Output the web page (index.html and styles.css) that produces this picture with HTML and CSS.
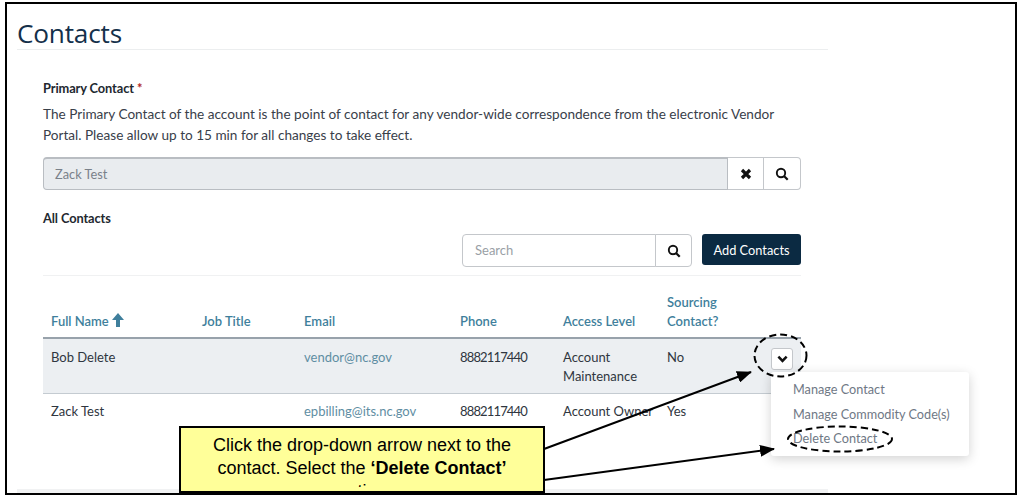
FILE: index.html
```html
<!DOCTYPE html>
<html lang="en">
<head>
<meta charset="utf-8">
<title>Contacts</title>
<link rel="stylesheet" href="styles.css">
</head>
<body>
<div class="frame">
  <div class="page">
    <h1 class="title">Contacts</h1>
    <section class="content">
      <div class="label">Primary Contact <span class="req">*</span></div>
      <p class="help">The Primary Contact of the account is the point of contact for any vendor-wide correspondence from the electronic Vendor Portal. Please allow up to 15 min for all changes to take effect.</p>
      <div class="primary">
        <div class="primary-input">Zack Test</div>
        <button class="addon"><svg class="ico" viewBox="0 0 12 12"><path d="M2 2L10 10M10 2L2 10" stroke="#111" stroke-width="3.2" fill="none"/></svg></button>
        <button class="addon addon-end"><svg class="ico-s" viewBox="0 0 14 14"><circle cx="6" cy="6" r="4.2" stroke="#111" stroke-width="1.9" fill="none"/><path d="M9 9L12.7 12.7" stroke="#111" stroke-width="2.2"/></svg></button>
      </div>
      <div class="label all">All Contacts</div>
      <div class="tools">
        <div class="search">
          <div class="search-input">Search</div>
          <button class="addon addon-end search-btn"><svg class="ico-s" viewBox="0 0 14 14"><circle cx="6" cy="6" r="4.2" stroke="#111" stroke-width="1.9" fill="none"/><path d="M9 9L12.7 12.7" stroke="#111" stroke-width="2.2"/></svg></button>
        </div>
        <button class="add">Add Contacts</button>
      </div>
      <div class="table">
        <div class="row head">
          <div class="c1">Full Name <svg class="up" viewBox="0 0 12 14"><path d="M6 0L12 7H8V14H4V7H0Z" fill="#3f7f9c"/></svg></div>
          <div class="c2">Job Title</div>
          <div class="c3">Email</div>
          <div class="c4">Phone</div>
          <div class="c5">Access Level</div>
          <div class="c6">Sourcing Contact?</div>
        </div>
        <div class="row body shade">
          <div class="c1">Bob Delete</div>
          <div class="c2"></div>
          <div class="c3 link">vendor@nc.gov</div>
          <div class="c4 tel">8882117440</div>
          <div class="c5">Account Maintenance</div>
          <div class="c6">No</div>
          <button class="toggle"><svg class="chev" viewBox="0 0 12 8"><path d="M1.5 1.500L6 6L10.500 1.500" stroke="#111" stroke-width="2.8" fill="none"/></svg></button>
        </div>
        <div class="row body next">
          <div class="c1">Zack Test</div>
          <div class="c2"></div>
          <div class="c3 link">epbilling@its.nc.gov</div>
          <div class="c4 tel">8882117440</div>
          <div class="c5 nowrap">Account Owner</div>
          <div class="c6">Yes</div>
        </div>
      </div>
    </section>
    <div class="foot-band"></div>
  </div>
  <div class="menu">
    <div class="menu-item">Manage Contact</div>
    <div class="menu-item">Manage Commodity Code(s)</div>
    <div class="menu-item">Delete Contact</div>
  </div>
  <svg class="overlay" viewBox="0 0 1019 499">
    <defs>
      <marker id="head" markerWidth="15" markerHeight="12" refX="14" refY="6" orient="auto" markerUnits="userSpaceOnUse"><path d="M0 0L15 6L0 12Z" fill="#000"/></marker>
    </defs>
    <line x1="544" y1="449" x2="751" y2="372" stroke="#000" stroke-width="2" marker-end="url(#head)"/>
    <line x1="544" y1="480" x2="774" y2="449" stroke="#000" stroke-width="2" marker-end="url(#head)"/>
    <ellipse cx="780.500" cy="355.500" rx="26" ry="21" fill="none" stroke="#000" stroke-width="2" stroke-dasharray="7 4"/>
    <ellipse cx="840" cy="439" rx="52" ry="12.500" fill="none" stroke="#000" stroke-width="2" stroke-dasharray="7 4"/>
  </svg>
  <div class="callout"><div class="callout-text">Click the drop-down arrow next to the contact. Select the <b>‘Delete Contact’</b> option</div></div>
</div>
</body>
</html>
```
FILE: styles.css
```css
* { box-sizing: border-box; }
html, body { margin: 0; padding: 0; background: #fff; }
body { width: 1019px; height: 499px; overflow: hidden; font-family: "Lato", "Noto Sans", sans-serif; color: #2f3640; }
button { font-family: inherit; padding: 0; margin: 0; }
.frame { position: relative; width: 1012px; height: 493px; margin: 2px 0 0 5px; border: 2px solid #000; overflow: hidden; background: #fff; }
.page { width: 821px; height: 100%; padding-left: 10px; display: flex; flex-direction: column; }
.title { margin: 0; height: 46px; padding-top: 11px; font-size: 26.200px; line-height: 36px; font-weight: 400; color: #14304a; border-bottom: 1px solid #eceeef; font-family: "Open Sans", sans-serif; letter-spacing: -.2px; }
.content { padding: 29px 27px 0 26px; flex: 1; }
.label { font-size: 12.800px; line-height: 18px; font-weight: 700; color: #22282f; letter-spacing: -.1px; }
.req { color: #b3261e; }
.help { margin: 7px 0 0; font-size: 13.600px; line-height: 21px; color: #39404a; width: 735px; }
.primary { display: flex; height: 33px; margin-top: 11px; width: 758px; }
.primary-input { flex: 1; background: #e9ecef; border: 1px solid #b9bdc2; border-top-width: 2px; border-radius: 4px 0 0 4px; padding: 0 11px; line-height: 30px; font-size: 12.800px; color: #7a818a; }
.addon { width: 36px; background: #fff; border: 1px solid #c4c7cb; border-left: 0; display: flex; align-items: center; justify-content: center; }
.addon-end { width: 37px; border-radius: 0 4px 4px 0; }
.ico { width: 12px; height: 12px; }
.ico-s { width: 14px; height: 14px; }
.all { margin-top: 19px; }
.tools { display: flex; justify-content: flex-end; align-items: flex-start; gap: 10px; margin-top: 7px; height: 42px; border-bottom: 1px solid #f0f1f2; width: 758px; }
.search { display: flex; width: 230px; height: 33px; }
.search-input { flex: 1; border: 1px solid #c4c7cb; border-radius: 4px 0 0 4px; padding: 0 12px; line-height: 31px; font-size: 13px; color: #9a9fa6; }
.search-btn { border-left: 1px solid #c4c7cb; margin-left: -1px; }
.add { width: 99px; height: 31px; background: #0b2a42; color: #fff; border: 0; border-radius: 3px; font-size: 12.800px; }
.table { width: 758px; }
.row { display: flex; position: relative; font-size: 13px; line-height: 19px; }
.head { height: 63px; align-items: flex-end; padding-bottom: 6px; border-bottom: 2px solid #98a2ab; color: #3f7f9c; font-weight: 600; }
.body { padding-top: 9px; }
.next { padding-top: 8px; }
.shade { height: 55px; background: #eceff2; border-bottom: 1px solid #c4cbd1; }
.c1 { width: 159px; padding-left: 8px; }
.c2 { width: 102px; }
.c3 { width: 156px; }
.c4 { width: 103px; }
.c5 { width: 104px; }
.c6 { width: 70px; }
.nowrap { white-space: nowrap; }
.tel { letter-spacing: -.85px; }
.link { color: #5f8ea3; }
.up { width: 12px; height: 14px; vertical-align: -1px; }
.toggle { position: absolute; left: 728px; top: 9px; width: 22px; height: 22px; background: #fff; border: 1px solid #c4c7cb; border-radius: 3px; display: flex; align-items: center; justify-content: center; }
.chev { width: 11px; height: 8px; }
.foot-band { height: 4px; background: #f1f2f3; }
.menu { position: absolute; left: 764px; top: 368px; width: 198px; height: 84px; background: #fff; border-radius: 3px; box-shadow: 0 3px 12px rgba(0,0,0,.18); padding: 5px 0 0 22px; }
.menu-item { font-size: 12.700px; line-height: 24.500px; color: #6f7885; white-space: nowrap; }
.overlay { position: absolute; left: -7px; top: -4px; width: 1019px; height: 499px; }
.callout { position: absolute; left: 172px; top: 422px; width: 366px; height: 67px; background: #ffff99; border: 2px solid #000; padding: 6px 10px 0; text-align: center; font-family: "Liberation Sans", Arial, sans-serif; font-size: 18px; line-height: 23px; color: #000; }
.callout-text { height: 53px; overflow: hidden; }
```
